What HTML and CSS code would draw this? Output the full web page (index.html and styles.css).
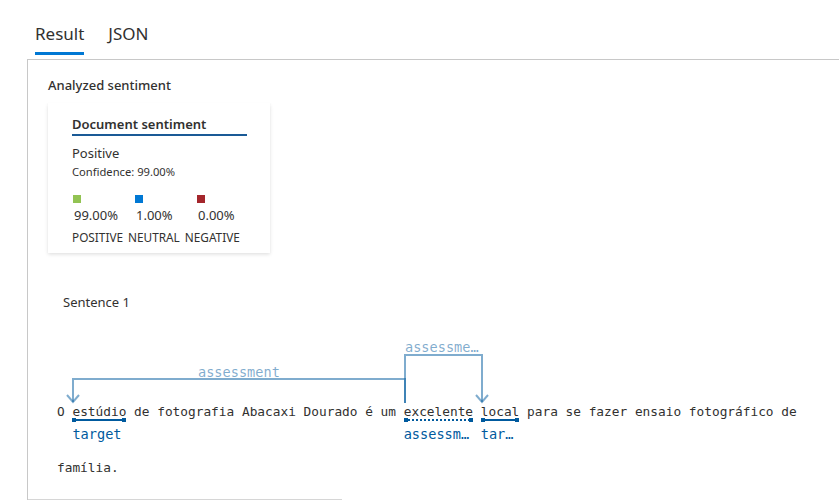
FILE: index.html
```html
<!DOCTYPE html>
<html lang="pt">
<head>
<meta charset="utf-8">
<title>Result</title>
<link rel="stylesheet" href="styles.css">
</head>
<body>
<div class="tabs">
  <div class="tab active">Result</div>
  <div class="tab">JSON</div>
</div>
<div class="panel">
  <div class="section-title">Analyzed sentiment</div>
  <div class="card">
    <div class="card-title">Document sentiment</div>
    <div class="sentiment">Positive</div>
    <div class="confidence">Confidence: 99.00%</div>
    <div class="scores">
      <div class="score"><span class="swatch pos"></span><span class="value">99.00%</span></div>
      <div class="score"><span class="swatch neu"></span><span class="value">1.00%</span></div>
      <div class="score"><span class="swatch neg"></span><span class="value">0.00%</span></div>
    </div>
    <div class="names">
      <span>POSITIVE</span><span>NEUTRAL</span><span>NEGATIVE</span>
    </div>
  </div>
  <div class="sentence-title">Sentence 1</div>
  <div class="sentence">
    <svg class="arcs" width="460" height="80" viewBox="0 0 460 80">
      <g class="arc">
        <polyline points="348,72 348,48 16,48 16,71"/>
        <polyline points="10,64 16,71 22,64"/>
        <text x="141" y="46" class="arc-label">assessment</text>
      </g>
      <g class="arc">
        <polyline points="348,72 348,24 425,24 425,71"/>
        <polyline points="419,64 425,71 431,64"/>
        <text x="348" y="21" class="arc-label">assessme…</text>
      </g>
    </svg>
    <div class="line">O <span class="w">estúdio</span> de fotografia Abacaxi Dourado é um <span class="w">excelente</span> <span class="w">local</span> para se fazer ensaio fotográfico de</div>
    <div class="tags">
      <span class="tag t1"><span class="mark"></span><span class="tag-text">target</span></span>
      <span class="tag t2"><span class="mark dotted"></span><span class="tag-text">assessm…</span></span>
      <span class="tag t3"><span class="mark"></span><span class="tag-text">tar…</span></span>
    </div>
    <div class="line last">família.</div>
  </div>
  <div class="scrollbar"></div>
</div>
</body>
</html>
```
FILE: styles.css
```css
html, body {
  margin: 0;
  padding: 0;
  background: #ffffff;
}
body {
  font-family: "Noto Sans", "Open Sans", sans-serif;
  color: #323130;
  width: 839px;
  height: 501px;
  overflow: hidden;
}
.tabs {
  display: flex;
  gap: 24px;
  padding: 19px 0 0 35px;
  height: 40px;
}
.tab {
  font-size: 17px;
  line-height: 29px;
  height: 36px;
  color: #323130;
  box-sizing: border-box;
}
.tab.active {
  border-bottom: 3px solid #0078d4;
}
.panel {
  margin-left: 27px;
  border-top: 1px solid #c8c8c8;
  border-left: 1px solid #c8c8c8;
  height: 441px;
  position: relative;
  box-sizing: border-box;
}
.section-title {
  font-size: 13px;
  font-weight: 500;
  line-height: 18px;
  padding: 16px 0 0 20px;
  color: #323130;
}
.card {
  margin: 9px 0 0 20px;
  width: 222px;
  height: 150px;
  box-sizing: border-box;
  padding: 13px 0 0 24px;
  box-shadow: 0 1.6px 3.6px rgba(0,0,0,0.13), 0 0.3px 0.9px rgba(0,0,0,0.11);
}
.card-title {
  font-size: 13px;
  font-weight: 600;
  line-height: 17px;
  width: 175px;
  border-bottom: 2px solid #1a5a96;
  padding-bottom: 1px;
}
.sentiment {
  font-size: 13px;
  line-height: 18px;
  margin-top: 8px;
}
.confidence {
  font-size: 11.2px;
  line-height: 15px;
  margin-top: 2px;
}
.scores {
  display: flex;
  margin-top: 16px;
}
.score {
  display: flex;
  flex-direction: column;
  width: 61px;
  padding-left: 1px;
}
.swatch {
  width: 8px;
  height: 8px;
  display: block;
}
.swatch.pos { background: #92c353; }
.swatch.neu { background: #0078d4; }
.swatch.neg { background: #a4262c; }
.value {
  font-size: 13px;
  line-height: 18px;
  margin-top: 3px;
  padding-left: 1px;
}
.names {
  display: flex;
  gap: 5px;
  font-size: 11.8px;
  line-height: 16px;
  margin-top: 5px;
}
.sentence-title {
  font-size: 13px;
  line-height: 18px;
  margin: 40px 0 0 35px;
}
.sentence {
  position: relative;
  margin: 0 0 0 29px;
  padding-top: 93px;
  font-family: "DejaVu Sans Mono", "Liberation Mono", monospace;
}
.arcs {
  position: absolute;
  left: 0;
  top: 20px;
  overflow: visible;
}
.arc polyline {
  fill: none;
  stroke: rgba(0, 90, 158, 0.5);
  stroke-width: 2;
}
.arc-label {
  font-family: "DejaVu Sans Mono", monospace;
  font-size: 13.6px;
  fill: rgba(0, 90, 158, 0.5);
}
.line {
  font-size: 12.8px;
  line-height: 16px;
  white-space: nowrap;
  color: #323130;
}
.line.last {
  margin-top: 16px;
}
.tags {
  position: relative;
  height: 24px;
  font-size: 12.8px;
}
.tag {
  position: absolute;
  top: 0;
  display: flex;
  flex-direction: column;
}
.t1 { left: 2ch; width: 7ch; }
.t2 { left: 45ch; width: 9ch; }
.t3 { left: 55ch; width: 5ch; }
.mark {
  display: block;
  height: 2px;
  margin-top: -1px;
  background: #005a9e;
  position: relative;
}
.mark::before, .mark::after {
  content: "";
  position: absolute;
  top: -1px;
  width: 4px;
  height: 4px;
  background: #005a9e;
}
.mark::before { left: 0; }
.mark::after { right: 0; }
.mark.dotted {
  background: repeating-linear-gradient(90deg, #005a9e 0 2px, transparent 2px 4px);
}
.tag-text {
  font-size: 13.6px;
  line-height: 18px;
  margin-top: 4px;
  color: #005a9e;
  white-space: nowrap;
}
.scrollbar {
  position: absolute;
  left: 0;
  bottom: 0;
  width: 314px;
  height: 1px;
  background: #d6d6d6;
}
```
